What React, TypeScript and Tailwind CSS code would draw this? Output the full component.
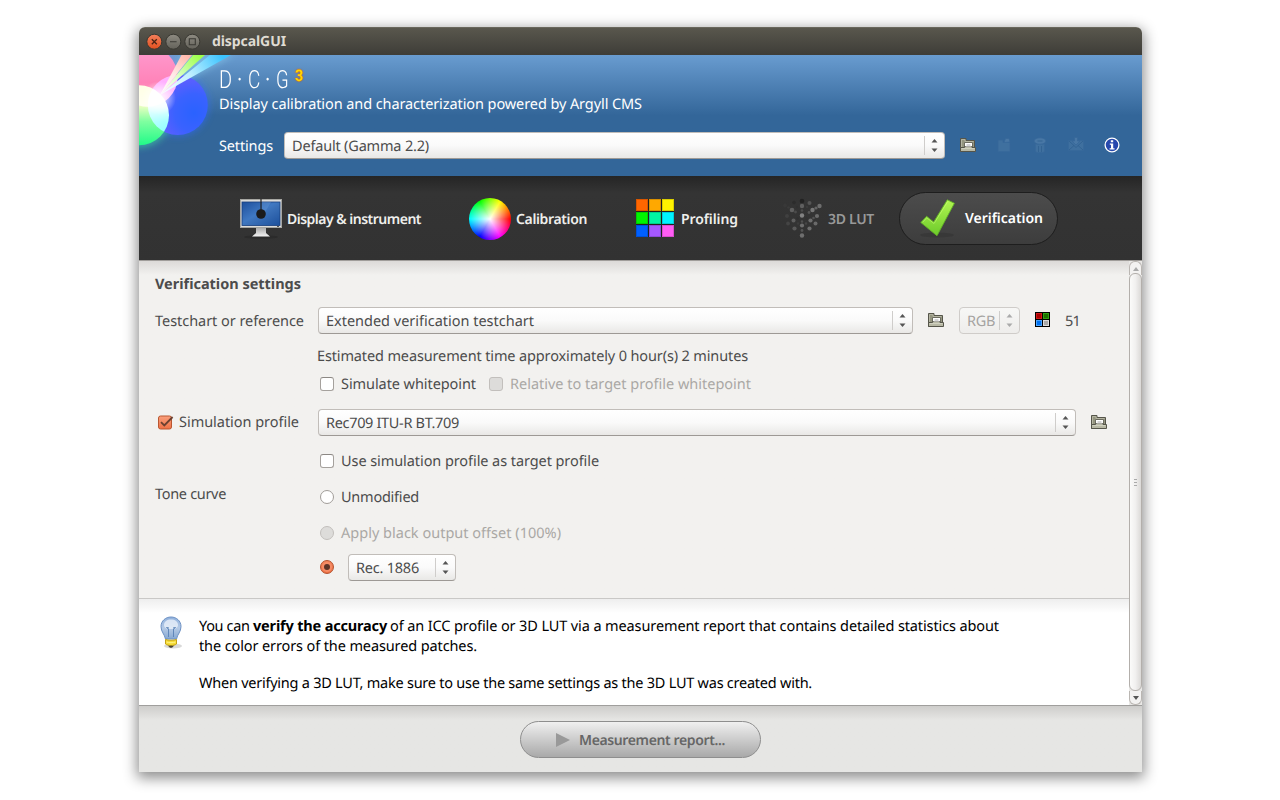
import { useLayoutEffect, useRef, type ReactNode } from "react";

/** Single-line label whose tracking is adjusted so the text fills the width of its box. */
function Fit({ className, children }: { className: string; children: ReactNode }) {
  const inner = useRef<HTMLSpanElement>(null);
  useLayoutEffect(() => {
    const el = inner.current;
    if (!el || !el.parentElement) return;
    const target = el.parentElement.getBoundingClientRect().width;
    const count = (el.textContent ?? "").length;
    el.style.letterSpacing = "0px";
    let spacing = 0;
    for (let i = 0; i < 3; i++) {
      spacing += (target - el.getBoundingClientRect().width) / count;
      el.style.letterSpacing = `${spacing}px`;
    }
  }, []);
  return (
    <span className={`block shrink-0 whitespace-pre leading-5 ${className}`}>
      <span ref={inner} className="inline-block">{children}</span>
    </span>
  );
}

function Arrows({ muted = false }: { muted?: boolean }) {
  return (
    <svg width="7" height="13" viewBox="0 0 7 13" className="shrink-0" fill={muted ? "#aaa" : "#555"}>
      <path d="M3.5 0 6.5 3.5h-6z" />
      <path d="M.5 9.500h6l-3 3.500z" />
    </svg>
  );
}

function Combo({ className, muted = false, children }: { className: string; muted?: boolean; children: ReactNode }) {
  const tone = muted
    ? "border-[#cfccc9] from-[#f7f7f6] to-[#eeedeb] text-[#a5a3a1]"
    : "border-[#c1bdb9] border-b-[#9d9995] from-white via-[#fafafa] to-[#e9e8e6] text-[#4c4c4c]";
  return (
    <div className={`flex h-[27px] shrink-0 items-center justify-between rounded border bg-linear-to-b pr-[6px] pl-[7px] ${tone} ${className}`}>
      {children}
      <div className="flex h-[19px] items-center border-l border-[#cfcdcb] pl-[6px]">
        <Arrows muted={muted} />
      </div>
    </div>
  );
}

function FolderIcon({ className = "" }: { className?: string }) {
  return (
    <svg width="16" height="16" viewBox="0 0 16 16" className={`shrink-0 ${className}`}>
      <path d="M.5 14.500V1.500H6V3.500H14.500V14.500Z" fill="#94957f" stroke="#55554a" />
      <path d="M1.500 11V2.500H5V4.500H13.500" fill="none" stroke="#b4b5a2" />
      <path d="M4.500 10.500V5.500H12.500V10.500" fill="#fff" stroke="#6c6c60" />
      <path d="M6.500 7.500H10.500" stroke="#999" />
      <path d="M.5 10.500H4.500V9.500H12V10.500H15.500V14.500H.5Z" fill="#b8b9a5" stroke="#55554a" />
      <path d="M1.500 11.500H14.500" stroke="#d0d1c0" />
      <path d="M5.500 6.500H11.500V9.500H5.500Z" fill="#fff" />
      <path d="M6.500 8H10.500" stroke="#aaa" />
    </svg>
  );
}

function Checkbox({ state = "off" }: { state?: "off" | "on" | "disabled" }) {
  if (state === "on")
    return (
      <svg width="17" height="17" viewBox="0 0 17 17" className="shrink-0">
        <defs>
          <linearGradient id="cb" x2="0" y2="1">
            <stop stopColor="#f99f7c" />
            <stop offset="1" stopColor="#ef7145" />
          </linearGradient>
        </defs>
        <rect x="1.5" y="2" width="13" height="13" rx="2" fill="url(#cb)" stroke="#b95731" />
        <path d="M4 8.200 7.300 11.500 15.600 3" fill="none" stroke="#6b4030" strokeWidth="1.800" />
      </svg>
    );
  return (
    <span
      className={`block size-[14px] shrink-0 rounded-[3px] border ${
        state === "disabled" ? "border-[#c2bfbc] bg-[#dddcda]" : "border-[#a5a19d] border-t-[#8c8884] bg-white"
      }`}
    />
  );
}

function Radio({ state = "off" }: { state?: "off" | "on" | "disabled" }) {
  if (state === "on")
    return (
      <span className="flex size-[14px] shrink-0 items-center justify-center rounded-full border border-[#b3522e] bg-linear-to-b from-[#f3855c] to-[#ee6f43]">
        <span className="flex size-[10px] items-center justify-center rounded-full bg-[#f58c66]">
          <span className="size-[6px] rounded-full bg-[#5b3327]" />
        </span>
      </span>
    );
  return (
    <span
      className={`block size-[14px] shrink-0 rounded-full border ${
        state === "disabled" ? "border-[#c2bfbc] bg-[#dddcda]" : "border-[#a19d99] bg-white"
      }`}
    />
  );
}

function Logo() {
  return (
    <svg width="120" height="121" viewBox="0 0 120 121" className="shrink-0">
      <defs>
        <filter id="glow" x="-40%" y="-40%" width="180%" height="180%">
          <feGaussianBlur stdDeviation="3.5" />
        </filter>
        <filter id="soft" x="-10%" y="-30%" width="120%" height="160%">
          <feGaussianBlur stdDeviation="3" />
        </filter>
        <radialGradient id="lb" gradientUnits="userSpaceOnUse" cx="55" cy="58" r="48">
          <stop stopColor="#2a62ff" />
          <stop offset=".4" stopColor="#3a62ff" />
          <stop offset="1" stopColor="#7a5cff" />
        </radialGradient>
        <linearGradient id="lg" x2="0" y2="1">
          <stop stopColor="#fbffa0" />
          <stop offset=".35" stopColor="#e8ffc0" />
          <stop offset=".6" stopColor="#80ffa0" />
          <stop offset="1" stopColor="#20fa88" />
        </linearGradient>
        <linearGradient id="lp" x2="0" y2="1">
          <stop stopColor="#ff9cd0" />
          <stop offset=".6" stopColor="#ff83b8" />
          <stop offset="1" stopColor="#ffa8c4" />
        </linearGradient>
        <linearGradient id="b1" gradientUnits="userSpaceOnUse" x1="22" y1="39" x2="48" y2="0">
          <stop stopColor="#fff" />
          <stop offset=".5" stopColor="#ffe9e6" />
          <stop offset="1" stopColor="#ffb8ac" />
        </linearGradient>
        <linearGradient id="b2" gradientUnits="userSpaceOnUse" x1="22" y1="39" x2="60" y2="0">
          <stop stopColor="#fff" />
          <stop offset=".45" stopColor="#dcffc8" />
          <stop offset="1" stopColor="#9dff4a" />
        </linearGradient>
        <linearGradient id="b3" gradientUnits="userSpaceOnUse" x1="22" y1="39" x2="82" y2="0">
          <stop stopColor="#fff" />
          <stop offset=".5" stopColor="#bdefff" />
          <stop offset="1" stopColor="#3cc4ff" />
        </linearGradient>
        <radialGradient id="hot">
          <stop stopColor="#fff" stopOpacity=".95" />
          <stop offset="1" stopColor="#fff" stopOpacity="0" />
        </radialGradient>
      </defs>
      <g filter="url(#glow)" opacity=".6">
        <circle cx="38.8" cy="50" r="31" fill="#2f6cff" />
        <circle cx="0" cy="60.3" r="32" fill="#3fe0a8" />
        <circle cx="8.7" cy="21.7" r="31" fill="#9b8fe8" />
      </g>
      <path d="M21 40 42 0H96Z" fill="#8fd8f8" opacity=".45" filter="url(#soft)" />
      <g className="isolate">
        <circle cx="38.8" cy="50" r="30" fill="url(#lb)" />
        <circle cx="8.7" cy="21.7" r="30" fill="url(#lp)" className="mix-blend-screen" />
        <circle cx="0" cy="60.3" r="30" fill="url(#lg)" className="mix-blend-screen" />
      </g>
      <circle cx="20" cy="43" r="17" fill="url(#hot)" />
      <path d="M21 40 42.500 0H53Z" fill="url(#b1)" />
      <path d="M21 40 54 0H66Z" fill="url(#b2)" />
      <path d="M21 40 71 0H92Z" fill="url(#b3)" />
    </svg>
  );
}

function FadedIcon({ children }: { children: ReactNode }) {
  return (
    <svg width="16" height="16" viewBox="0 0 16 16" className="shrink-0" fill="#3f709f" stroke="#37689a" strokeWidth=".8">
      {children}
    </svg>
  );
}

function MonitorIcon() {
  return (
    <svg width="44" height="40" viewBox="0 0 44 40" className="mt-px shrink-0">
      <defs>
        <linearGradient id="scr" x2="1" y2="1">
          <stop stopColor="#1d4f9c" />
          <stop offset=".45" stopColor="#3f78c2" />
          <stop offset=".55" stopColor="#3a70b8" />
          <stop offset="1" stopColor="#1c509c" />
        </linearGradient>
        <linearGradient id="std" x2="0" y2="1">
          <stop stopColor="#aaa" />
          <stop offset="1" stopColor="#f4f4f4" />
        </linearGradient>
      </defs>
      <ellipse cx="21" cy="38" rx="17" ry="1.8" fill="#262626" opacity=".6" />
      <path d="M16 29H26V34L30 37.500H12L16 34Z" fill="url(#std)" />
      <rect x=".5" y=".5" width="41" height="28" fill="#dcdcda" stroke="#a6a6a2" />
      <rect x="2" y="3" width="38" height="23.500" fill="url(#scr)" stroke="#173f7e" strokeWidth=".8" />
      <path d="M22 3H31L23.500 16 22 11Z" fill="#6a9ad8" opacity=".35" />
      <path d="M21 0V12" stroke="#222" strokeWidth="1.200" />
      <circle cx="21" cy="15" r="4.800" fill="#1b1b1b" />
      <path d="M37 27.500H39" stroke="#555" />
    </svg>
  );
}

const SWATCHES = [
  "bg-[#ff6600]", "bg-[#ffa800]", "bg-[#fff200]",
  "bg-[#00f400]", "bg-[#00f5a4]", "bg-[#00f4ff]",
  "bg-[#0060ff]", "bg-[#a558ff]", "bg-[#ff5cf4]",
];

/* [x, y, radius, brightness] for the nodes of the cube lattice */
const NODES: [number, number, number, number][] = [
  [20, 3, 2.3, 34], [3, 7.5, 2, 56], [12, 4.5, 1.8, 44], [27.5, 5, 2, 85], [37.5, 8, 2.2, 110],
  [6.5, 9.5, 1.3, 60], [10, 12, 2.3, 95], [13.500, 14, 1.4, 75], [20, 8, 2.2, 95], [30.5, 12, 2.2, 120], [34, 10, 1.6, 100], [27, 14.500, 1.4, 85], [15, 9, 1.2, 50], [25, 9, 1.2, 60],
  [5, 18, 2, 64], [20, 17.5, 2.2, 130], [35, 18, 2.1, 108],
  [20, 12.5, 1.3, 75], [11.5, 22.5, 2, 95], [15.500, 20.500, 1.3, 48], [24.500, 20.500, 1.3, 50], [28.5, 22.5, 2.1, 110], [31.5, 20, 1.3, 85],
  [6, 25.5, 1.9, 68], [16, 25.500, 1.2, 60], [24, 25.500, 1.2, 70], [33.5, 25.5, 2, 105],
  [20, 23.500, 1.2, 80], [20, 27.5, 2.1, 110], [12.5, 30.5, 2.1, 90], [27.5, 30.5, 2.1, 110], [20, 32.5, 1.4, 85], [20, 37.5, 2.2, 110],
];

function LatticeIcon() {
  return (
    <svg width="40" height="41" viewBox="0 0 40 41" className="shrink-0">
      {NODES.map(([x, y, r, v], i) => (
        <circle key={i} cx={x} cy={y} r={r} fill={`rgb(${v},${v},${v})`} />
      ))}
    </svg>
  );
}

function CheckIcon() {
  return (
    <svg width="38" height="40" viewBox="0 0 38 40" className="mt-px shrink-0">
      <defs>
        <linearGradient id="ck" x2="0" y2="1">
          <stop stopColor="#b2f552" />
          <stop offset="1" stopColor="#6cca2a" />
        </linearGradient>
      </defs>
      <ellipse cx="17" cy="36" rx="17" ry="2.600" fill="#333" opacity=".6" />
      <path d="M.8 23.500 6.600 17.300 13.700 23 27.300.8 34.400 4.300 17 36.700Z" fill="url(#ck)" stroke="#62b325" strokeWidth=".9" />
      <path d="M2.600 23.300 6.800 18.800 14 24.500 27.800 2.400" fill="none" stroke="#d2ff80" strokeWidth=".8" opacity=".6" />
    </svg>
  );
}

function BulbIcon() {
  return (
    <svg width="24" height="34" viewBox="0 0 24 34" className="shrink-0">
      <defs>
        <linearGradient id="bulb" x2="0" y2="1">
          <stop stopColor="#8fb0dc" />
          <stop offset=".5" stopColor="#b5cae6" />
          <stop offset="1" stopColor="#86a8d2" />
        </linearGradient>
      </defs>
      <ellipse cx="13" cy="30" rx="9" ry="2.500" fill="#000" opacity=".15" />
      <path d="M11 1C16.500 1 21 5 21 10.500C21 16 17.500 18 16.500 23H5.500C4.500 18 1 16 1 10.500C1 5 5.500 1 11 1Z" fill="url(#bulb)" stroke="#6d91c4" />
      <path d="M11 3.500C15 3.500 18 5.500 18 9C18 12 15 13 11 13C7 13 4 12 4 9C4 5.500 7 3.500 11 3.500Z" fill="#edf3fb" opacity=".75" />
      <path d="M8.500 21V13L6.500 11.500L9 12M13.500 21V13L15.500 11.500L13 12" fill="none" stroke="#6087ba" />
      <path d="M5.500 23.500C8 24.500 14 24.500 16.500 23.500V28C14 30 8 30 5.500 28Z" fill="#f6dc35" stroke="#c4a113" />
      <path d="M6.500 26C9 27 13 27 15.500 26" fill="none" stroke="#fff38a" />
      <path d="M8 29.800H14L12 31.700H10Z" fill="#4b4432" />
    </svg>
  );
}

function Scrollbar() {
  return (
    <div className="flex w-[13px] shrink-0 flex-col bg-[#e9e8e6]">
      <div className="flex h-3.5 items-center justify-center rounded-t-md border border-b-0 border-[#bab6b2] bg-[#f3f2f1]">
        <svg width="6" height="4" viewBox="0 0 6 4"><path d="M3 0 6 4H0Z" fill="#aaa" /></svg>
      </div>
      <div className="-mt-0.5 flex flex-1 flex-col items-center justify-center gap-0.5 rounded-md border border-[#b3afab] bg-linear-to-r from-[#fbfbfa] via-[#f1f0ef] to-[#dbd9d7]">
        <span className="h-px w-[3px] bg-[#aaa]" />
        <span className="h-px w-[3px] bg-[#aaa]" />
        <span className="h-px w-[3px] bg-[#aaa]" />
      </div>
      <div className="flex h-3.5 items-center justify-center rounded-b-md border border-t-0 border-[#bab6b2] bg-[#f3f2f1]">
        <svg width="6" height="4" viewBox="0 0 6 4"><path d="M0 0H6L3 4Z" fill="#555" /></svg>
      </div>
    </div>
  );
}

export default function App() {
  return (
    <div className="h-[800px] w-[1280px] overflow-hidden bg-white pt-[27px] pl-[139px] font-['Noto_Sans',sans-serif] text-[14.5px] text-[#4c4c4c] [text-rendering:geometricPrecision]">
      <div className="flex h-[745px] w-[1003px] flex-col overflow-hidden rounded-t-[6px] shadow-[0_4px_14px_2px_rgba(0,0,0,0.45)]">
        {/* Title bar */}
        <div className="flex h-7 shrink-0 items-center border-t border-[#69675c] bg-linear-to-b from-[#59574d] to-[#3e3d38] pl-[7px]">
          <svg width="56" height="18" viewBox="0 0 56 18" className="shrink-0">
            <defs>
              <linearGradient id="wc" x2="0" y2="1"><stop stopColor="#f4805c" /><stop offset="1" stopColor="#e1501f" /></linearGradient>
              <linearGradient id="wb" x2="0" y2="1"><stop stopColor="#8e8b82" /><stop offset="1" stopColor="#64625a" /></linearGradient>
            </defs>
            <circle cx="8.300" cy="8.700" r="7.500" fill="url(#wc)" stroke="#393832" />
            <circle cx="27.300" cy="8.700" r="7.500" fill="url(#wb)" stroke="#393832" />
            <circle cx="46.300" cy="8.700" r="7.500" fill="url(#wb)" stroke="#393832" />
            <path d="M5.800 6.200 10.800 11.200M10.800 6.200 5.800 11.200" stroke="#4a2415" strokeWidth="1.300" />
            <path d="M24 8.700H30.600M43.300 5.700H49.300V11.700H43.300Z" fill="none" stroke="#3b3a35" strokeWidth="1.100" />
          </svg>
          <Fit className="mt-px ml-2.5 w-[74px] text-[14px] font-bold text-[#dfdbd2]">dispcalGUI</Fit>
        </div>

        {/* Header */}
        <div className="flex h-[121px] shrink-0 bg-linear-to-b from-[#699cd0] from-0% via-[#336699] via-50% to-[#336699]">
          <Logo />
          <div className="-ml-10 flex flex-1 flex-col">
            <div className="mt-3 flex h-7 items-center font-['Roboto',sans-serif] text-[25px] leading-7 text-white">
              <span className="w-[18px]"><span className="inline-block origin-left scale-x-[.8] font-light">D</span></span>
              <span className="w-[11px]"><span className="inline-block origin-left scale-x-[.82]">·</span></span>
              <span className="w-[17px]"><span className="inline-block origin-left scale-x-[.76] font-light">C</span></span>
              <span className="w-[11px]"><span className="inline-block origin-left scale-x-[.82]">·</span></span>
              <span className="w-[19px]"><span className="inline-block origin-left scale-x-[.74] font-light">G</span></span>
              <span className="mb-2.5 inline-block origin-left scale-x-90 text-base font-bold text-[#ffd800] [text-shadow:0_0_1px_#e05a00,0_0_2px_#e05a00]">3</span>
            </div>
            <Fit className="-mt-px w-[423px] text-white">Display calibration and characterization powered by Argyll CMS</Fit>
            <div className="mt-[18px] flex h-[27px] items-center">
              <Fit className="w-[54px] text-white">Settings</Fit>
              <Combo className="ml-[11px] w-[661px]">
                <Fit className="w-[137px]">Default (Gamma 2.2)</Fit>
              </Combo>
              <div className="mb-0.5 ml-[15px] flex items-center gap-5">
                <FolderIcon />
                <FadedIcon>
                  <path d="M2 3H7V5.500H14V14.500H2Z" />
                  <path d="M8 5.500 9.500 1.500H13L14 5Z" fill="#4877a5" />
                </FadedIcon>
                <FadedIcon>
                  <path d="M3.500 7H12.500V14.500L11 15.500H5L3.500 14.500Z" />
                  <ellipse cx="8" cy="4" rx="6" ry="3.200" fill="#4877a5" />
                  <path d="M6.500 9V15M9.500 9V15M5.500 4H10.500" stroke="#2e5f90" />
                </FadedIcon>
                <FadedIcon>
                  <path d="M.5 3.500H15.500V13.500H.5Z" />
                  <path d="M1 4 8 10.500 15 4M1 13 6 8.500M15 13 10 8.500" fill="none" stroke="#2e5f90" />
                  <path d="M8 8 4 4H6.500V.5H9.500V4H12Z" fill="#4877a5" />
                </FadedIcon>
                <svg width="16" height="16" viewBox="0 0 16 16">
                  <circle cx="8" cy="8" r="6.900" fill="#2748ad" stroke="#fff" strokeWidth="1.300" />
                  <path d="M6.800 3.200H9.200V5.200H6.800ZM5.800 6.500H9.200V11.300H10.500V12.500H5.600V11.300H7V7.700H5.800Z" fill="#fff" />
                </svg>
              </div>
            </div>
          </div>
        </div>

        {/* Section tabs */}
        <div className="flex h-[84px] shrink-0 items-center bg-linear-to-b from-[#252525] from-0% via-[#343434] via-20% to-[#323232] pl-[101px] text-[14px] font-semibold text-[#efefec]">
          <MonitorIcon />
          <Fit className="mt-[3px] ml-[3px] w-[134px]">Display &amp; instrument</Fit>
          <div className="mt-px ml-[48px] size-[42px] shrink-0 rounded-full bg-[radial-gradient(circle,white_0%,rgba(255,255,255,0.55)_30%,transparent_68%),conic-gradient(from_90deg,#f00,#f0f,#00f,#0ff,#0f0,#ff0,#f00)]" />
          <Fit className="mt-[3px] ml-[5px] w-[71px]">Calibration</Fit>
          <div className="ml-[49px] grid shrink-0 grid-cols-[repeat(3,12px)] grid-rows-[repeat(3,12px)] gap-px bg-[#202020]">
            {SWATCHES.map((c) => (
              <span key={c} className={`border border-black/15 ${c}`} />
            ))}
          </div>
          <Fit className="mt-[3px] ml-[7px] w-[57px]">Profiling</Fit>
          <div className="ml-[44px] flex items-center text-[#999]">
            <LatticeIcon />
            <Fit className="mt-[3px] ml-[6px] w-[46px]">3D LUT</Fit>
          </div>
          <div className="ml-[25px] flex h-[53px] w-[159px] items-center rounded-full border border-[#1e1e1e] bg-linear-to-b from-[#4c4c4c] to-[#3d3d3d] pl-[20px] text-white">
            <CheckIcon />
            <Fit className="mt-0.5 ml-[7px] w-[78px]">Verification</Fit>
          </div>
        </div>

        {/* Scrolled page */}
        <div className="flex h-[445px] shrink-0 border-t border-[#a09d9a] bg-[#f2f1ef]">
          <div className="flex w-[990px] flex-col">
            <div className="flex h-[338px] flex-col border-b border-[#c9c8c6] bg-linear-to-b from-[#dcdad8] from-0% via-[#f2f1ef] via-[14px] to-[#f2f1ef] pl-4">
              <Fit className="mt-[13px] w-[146px] font-bold">Verification settings</Fit>
              <div className="mt-[13px] flex h-[27px] items-center">
                <Fit className="w-[149px]">Testchart or reference</Fit>
                <Combo className="ml-[14px] w-[595px]">
                  <Fit className="w-[208px]">Extended verification testchart</Fit>
                </Combo>
                <FolderIcon className="mb-0.5 ml-[15px]" />
                <Combo muted className="ml-[15px] w-[61px]">
                  <Fit className="w-[28px]">RGB</Fit>
                </Combo>
                <div className="mb-0.5 ml-[15px] grid size-[15px] grid-cols-2 gap-px bg-black p-px">
                  <span className="border border-[#d01818] bg-[#a00]" />
                  <span className="border border-[#30a010] bg-[#1c7000]" />
                  <span className="border border-[#4aa5ff] bg-[#0070f0]" />
                  <span className="border border-[#dedede] bg-[#aaa]" />
                </div>
                <Fit className="ml-[15px] w-[15px]">51</Fit>
              </div>
              <Fit className="mt-[12px] ml-[162px] w-[431px]">Estimated measurement time approximately 0 hour(s) 2 minutes</Fit>
              <div className="mt-2 ml-[165px] flex h-5 items-center">
                <Checkbox />
                <Fit className="ml-[7px] w-[135px]">Simulate whitepoint</Fit>
                <div className="ml-[13px] flex items-center text-[#aaa8a5]">
                  <Checkbox state="disabled" />
                  <Fit className="ml-[7px] w-[241px]">Relative to target profile whitepoint</Fit>
                </div>
              </div>
              <div className="mt-[15px] flex h-[27px] items-center">
                <div className="mb-px ml-0.5 flex w-[161px] items-center">
                  <Checkbox state="on" />
                  <Fit className="ml-[5px] w-[120px]">Simulation profile</Fit>
                </div>
                <Combo className="w-[758px]">
                  <Fit className="w-[133px]">Rec709 ITU-R BT.709</Fit>
                </Combo>
                <FolderIcon className="mb-0.5 ml-[15px]" />
              </div>
              <div className="mt-[15px] ml-[165px] flex h-5 items-center">
                <Checkbox />
                <Fit className="ml-[7px] w-[258px]">Use simulation profile as target profile</Fit>
              </div>
              <div className="mt-[13px] flex items-start">
                <Fit className="mr-[94px] w-[71px]">Tone curve</Fit>
                <div className="mt-[3px] flex flex-col">
                  <div className="flex h-5 items-center">
                    <Radio />
                    <Fit className="ml-[7px] w-[78px]">Unmodified</Fit>
                  </div>
                  <div className="mt-4 flex h-5 items-center text-[#aaa8a5]">
                    <Radio state="disabled" />
                    <Fit className="ml-[7px] w-[220px]">Apply black output offset (100%)</Fit>
                  </div>
                  <div className="mt-[11px] flex h-[27px] items-center">
                    <span className="mb-0.5"><Radio state="on" /></span>
                    <Combo className="ml-[14px] w-[108px]">
                      <Fit className="w-[63px]">Rec. 1886</Fit>
                    </Combo>
                  </div>
                </div>
              </div>
            </div>
            <div className="flex flex-1 bg-linear-to-b from-[#eeeeee] from-0% via-white via-[14px] to-white pl-[21px] text-black">
              <div className="mt-[17px] w-[39px]"><BulbIcon /></div>
              <div className="mt-[17px] flex flex-col">
                <div className="flex">
                  <Fit className="w-[54px]">You can </Fit>
                  <Fit className="w-[134px] font-bold">verify the accuracy</Fit>
                  <Fit className="ml-[3px] w-[609px]">of an ICC profile or 3D LUT via a measurement report that contains detailed statistics about</Fit>
                </div>
                <Fit className="w-[278px]">the color errors of the measured patches.</Fit>
                <Fit className="mt-[17px] w-[613px]">When verifying a 3D LUT, make sure to use the same settings as the 3D LUT was created with.</Fit>
              </div>
            </div>
          </div>
          <Scrollbar />
        </div>

        {/* Footer */}
        <div className="flex flex-1 items-start justify-center border-t border-[#a09f9d] bg-linear-to-b from-[#cecdcb] from-0% via-[#e6e6e4] via-[14px] to-[#e6e6e4] pt-[15px]">
          <div className="flex h-[37px] w-[241px] items-center rounded-full border border-[#8e8e8e] bg-linear-to-b from-[#f0f0f0] to-[#a9a9a9] pl-[35px] text-[#666]">
            <svg width="14" height="14" viewBox="0 0 14 14" className="shrink-0"><path d="M0 0 14 7 0 14Z" fill="#999" /></svg>
            <Fit className="mt-0.5 ml-[9px] w-[146px] text-[14px] font-semibold">Measurement report...</Fit>
          </div>
        </div>
      </div>
    </div>
  );
}
